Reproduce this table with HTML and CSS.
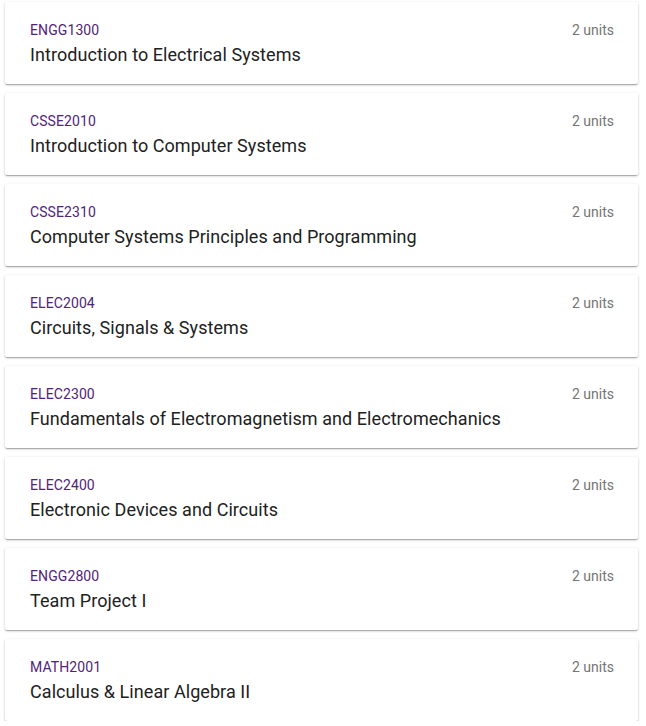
FILE: index.html
```html
<!DOCTYPE html>
<html>
<head>
<meta charset="utf-8">
<link rel="stylesheet" href="styles.css">
</head>
<body>
<div class="list">
  <div class="card"><div class="info"><div class="code">ENGG1300</div><div class="title">Introduction to Electrical Systems</div></div><div class="units">2 units</div></div>
  <div class="card"><div class="info"><div class="code">CSSE2010</div><div class="title">Introduction to Computer Systems</div></div><div class="units">2 units</div></div>
  <div class="card"><div class="info"><div class="code">CSSE2310</div><div class="title">Computer Systems Principles and Programming</div></div><div class="units">2 units</div></div>
  <div class="card"><div class="info"><div class="code">ELEC2004</div><div class="title">Circuits, Signals &amp; Systems</div></div><div class="units">2 units</div></div>
  <div class="card"><div class="info"><div class="code">ELEC2300</div><div class="title">Fundamentals of Electromagnetism and Electromechanics</div></div><div class="units">2 units</div></div>
  <div class="card"><div class="info"><div class="code">ELEC2400</div><div class="title">Electronic Devices and Circuits</div></div><div class="units">2 units</div></div>
  <div class="card"><div class="info"><div class="code">ENGG2800</div><div class="title">Team Project I</div></div><div class="units">2 units</div></div>
  <div class="card"><div class="info"><div class="code">MATH2001</div><div class="title">Calculus &amp; Linear Algebra II</div></div><div class="units">2 units</div></div>
</div>
</body>
</html>
```
FILE: styles.css
```css
html, body {
  margin: 0;
  padding: 0;
  background: #ffffff;
  font-family: Roboto, "Liberation Sans", sans-serif;
}
.list {
  display: flex;
  flex-direction: column;
  gap: 9px;
  padding: 2px 8px 0 5px;
}
.card {
  display: flex;
  justify-content: space-between;
  align-items: flex-start;
  height: 82px;
  box-sizing: border-box;
  padding: 18px 24px 0 25px;
  background: #fff;
  border-radius: 2px;
  box-shadow: 0 1px 3px rgba(0,0,0,0.2), 0 1px 1px rgba(0,0,0,0.14), 0 2px 1px -1px rgba(0,0,0,0.12);
}
.code {
  font-size: 14px;
  line-height: 20px;
  letter-spacing: 0.1px;
  color: #51247a;
}
.title {
  margin-top: 3px;
  font-size: 18px;
  line-height: 24px;
  letter-spacing: 0.06px;
  color: #212121;
}
.units {
  font-size: 14px;
  line-height: 20px;
  color: #757575;
}
```
